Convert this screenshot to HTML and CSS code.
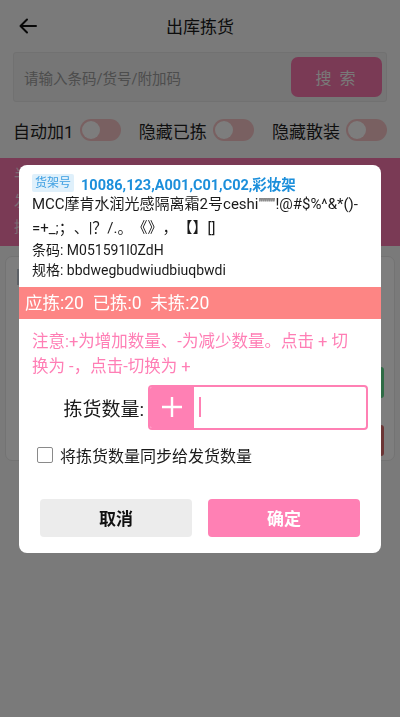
FILE: index.html
```html
<!DOCTYPE html>
<html lang="zh-CN">
<head>
<meta charset="utf-8">
<title>出库拣货</title>
<link rel="stylesheet" href="styles.css">
</head>
<body>
<div class="page">
  <header class="nav">
    <svg class="back" viewBox="0 0 18 16" width="18" height="16"><path d="M17 8H2M8 1.5L1.5 8 8 14.5" fill="none" stroke="#111" stroke-width="2" stroke-linecap="round" stroke-linejoin="round"/></svg>
    <h1 class="nav-title">出库拣货</h1>
  </header>

  <div class="search">
    <span class="search-ph">请输入条码/货号/附加码</span>
    <button class="search-btn">搜 索</button>
  </div>

  <div class="switches">
    <label class="sw">自动加1<span class="track"><span class="knob"></span></span></label>
    <label class="sw">隐藏已拣<span class="track"><span class="knob"></span></span></label>
    <label class="sw">隐藏散装<span class="track"><span class="knob"></span></span></label>
  </div>

  <div class="band">
    <p>半成品出库单</p>
    <p>发货单号: CK20240518</p>
    <p>拣货进度</p>
  </div>

  <div class="card">
    <div class="card-row"><span class="thumb"></span></div>
    <div class="card-actions">
      <span class="act act-green"></span>
      <span class="act act-red"></span>
    </div>
  </div>
</div>

<div class="mask">
  <div class="dialog">
    <div class="info">
      <div class="loc"><span class="tag">货架号</span><span class="loc-text">10086,123,A001,C01,C02,彩妆架</span></div>
      <p class="name">MCC摩肯水润光感隔离霜2号ceshi""""!@#$%^&amp;*()-=+_;；、|？/.。《》，【】[]</p>
      <p class="meta">条码: M051591l0ZdH</p>
      <p class="meta">规格: bbdwegbudwiudbiuqbwdi</p>
    </div>
    <div class="counts">应拣:20&nbsp;&nbsp;已拣:0&nbsp;&nbsp;未拣:20</div>
    <p class="note">注意:+为增加数量、-为减少数量。点击 + 切换为 -，点击-切换为 +</p>
    <div class="qty">
      <span class="qty-label">拣货数量:</span>
      <div class="qty-box">
        <span class="sign"><svg viewBox="0 0 20 20" width="20" height="20"><path d="M10 0V20M0 10H20" stroke="#fff" stroke-width="2.4"/></svg></span>
        <span class="caret"></span>
      </div>
    </div>
    <label class="sync"><span class="check"></span>将拣货数量同步给发货数量</label>
    <div class="btns">
      <button class="btn btn-cancel">取消</button>
      <button class="btn btn-ok">确定</button>
    </div>
  </div>
</div>
</body>
</html>
```

FILE: styles.css
```css
* { box-sizing: border-box; margin: 0; padding: 0; }

html, body {
  width: 400px;
  height: 717px;
  overflow: hidden;
}

body {
  background: #f4f4f4;
  font-family: Roboto, "Noto Sans CJK SC", sans-serif;
  color: #222;
  text-spacing-trim: space-all;
}

.page {
  display: flex;
  flex-direction: column;
}

/* top navigation */
.nav {
  height: 52px;
  display: flex;
  align-items: center;
  justify-content: center;
  position: relative;
}
.back {
  position: absolute;
  left: 19px;
  top: 18px;
}
.nav-title {
  font-size: 17px;
  font-weight: 400;
  color: #1a1a1a;
  margin-top: -1px;
}

/* search bar */
.search {
  margin: 0 13px;
  height: 50px;
  background: #ececec;
  border: 1px solid #e2e2e2;
  border-radius: 3px;
  display: flex;
  align-items: center;
  justify-content: space-between;
  padding: 0 4px 0 10px;
}
.search-ph {
  font-size: 14.5px;
  color: #9a9a9a;
}
.search-btn {
  width: 91px;
  height: 40px;
  border: none;
  border-radius: 7px;
  background: #f474aa;
  color: #f2f2f2;
  font-family: inherit;
  font-size: 16px;
  letter-spacing: 2px;
}

/* switches */
.switches {
  height: 56px;
  display: flex;
  align-items: center;
  justify-content: space-between;
  padding: 0 13px;
}
.sw {
  display: flex;
  align-items: center;
  font-size: 17px;
  color: #1f1f1f;
  gap: 6px;
}
.track {
  width: 41px;
  height: 22px;
  border-radius: 11px;
  background: #f2c0c2;
  display: flex;
  align-items: center;
  padding-left: 2px;
}
.knob {
  width: 18px;
  height: 18px;
  border-radius: 50%;
  background: #fafafa;
}

/* order band */
.band {
  height: 88px;
  background: #f474aa;
  padding: 4px 14px;
  color: #f6d8e6;
  font-size: 15px;
  line-height: 26px;
}

/* goods card */
.card {
  margin: 10px 5px 0;
  height: 205px;
  background: #fdfdfd;
  border: 1px solid #e6e6e6;
  border-radius: 7px;
  position: relative;
  padding: 12px 11px;
}
.thumb {
  display: block;
  width: 6px;
  height: 16px;
  background: #bcc4ce;
}
.card-actions {
  position: absolute;
  right: 10px;
  top: 110px;
  display: flex;
  flex-direction: column;
  gap: 27px;
}
.act {
  width: 36px;
  height: 31px;
  border-radius: 3px;
}
.act-green { background: #5cd68a; }
.act-red { background: #d66a6a; }

/* modal mask */
.mask {
  position: fixed;
  inset: 0;
  background: rgba(0, 0, 0, 0.5);
  display: flex;
  align-items: center;
  justify-content: center;
}

.dialog {
  width: 362px;
  height: 388px;
  background: #fff;
  border-radius: 8px;
  overflow: hidden;
  display: flex;
  flex-direction: column;
}

.info {
  padding: 9px 18px 0 13px;
}
.loc {
  display: flex;
  align-items: center;
  height: 19px;
  gap: 7px;
}
.tag {
  background: #dff0fb;
  color: #3d9fe2;
  font-size: 12px;
  line-height: 18px;
  padding: 0 3px;
  border-radius: 2px;
}
.loc-text {
  color: #1c8fdb;
  font-weight: 700;
  font-size: 14.5px;
  white-space: nowrap;
}
.name {
  font-size: 15px;
  line-height: 24px;
  color: #1a1a1a;
  word-break: break-all;
  margin-top: -1px;
}
.meta {
  font-size: 14px;
  line-height: 20.5px;
  color: #1a1a1a;
}

.counts {
  margin-top: 6px;
  height: 32px;
  background: #fd8584;
  color: #fff;
  font-size: 17.5px;
  line-height: 32px;
  padding-left: 6px;
}

.note {
  margin-top: 10px;
  padding: 0 20px 0 13px;
  color: #ff7eb5;
  font-size: 16.5px;
  line-height: 25px;
}

.qty {
  margin-top: 6px;
  display: flex;
  align-items: center;
  justify-content: flex-end;
  padding-right: 13px;
  gap: 4px;
}
.qty-label {
  font-size: 19px;
  color: #1a1a1a;
}
.qty-box {
  width: 220px;
  height: 45px;
  border: 2px solid #ff80b4;
  border-radius: 4px;
  display: flex;
  align-items: center;
  overflow: hidden;
}
.sign {
  width: 45px;
  height: 100%;
  background: #ff80b4;
  display: flex;
  align-items: center;
  justify-content: center;
  margin-left: -1px;
}
.caret {
  width: 1.5px;
  height: 20px;
  background: #ff80b4;
  margin-left: 5px;
}

.sync {
  margin-top: 13px;
  padding-left: 18px;
  display: flex;
  align-items: center;
  gap: 7px;
  font-size: 16px;
  color: #1a1a1a;
}
.check {
  width: 16px;
  height: 16px;
  border: 1.5px solid #8a8a8a;
  border-radius: 2px;
}

.btns {
  margin-top: auto;
  margin-bottom: 16px;
  display: flex;
  gap: 16px;
  padding: 0 21px;
}
.btn {
  flex: 1;
  height: 38px;
  border: none;
  border-radius: 4px;
  font-family: inherit;
  font-size: 17px;
  font-weight: 700;
}
.btn-cancel {
  background: #ececec;
  color: #111;
}
.btn-ok {
  background: #ff80b4;
  color: #fff;
}
```
